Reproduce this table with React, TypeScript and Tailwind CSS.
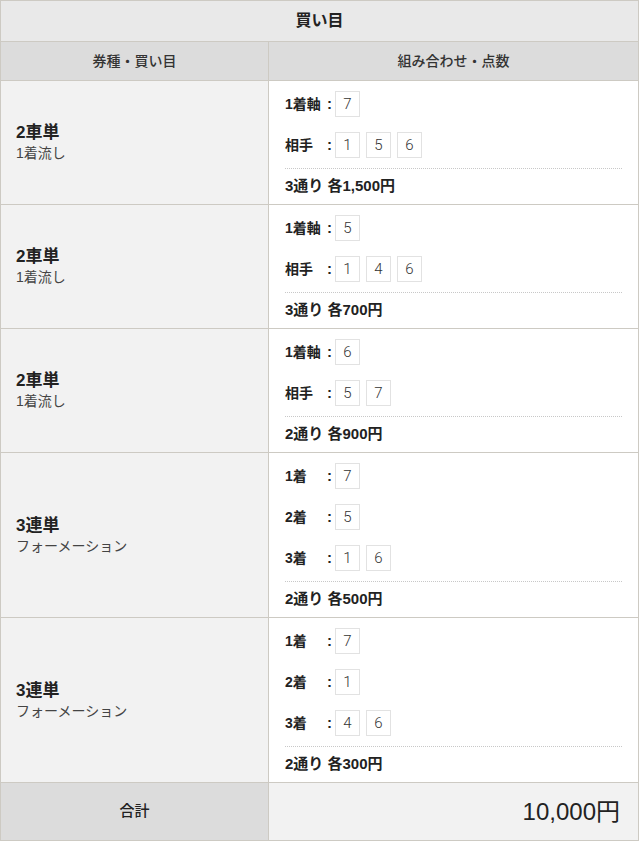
import React from "react";

type Line = { label: string; nums: string[] };
type Row = { type: string; sub: string; lines: Line[]; summary: string };

const rows: Row[] = [
  {
    type: "2車単",
    sub: "1着流し",
    lines: [
      { label: "1着軸", nums: ["7"] },
      { label: "相手", nums: ["1", "5", "6"] },
    ],
    summary: "3通り 各1,500円",
  },
  {
    type: "2車単",
    sub: "1着流し",
    lines: [
      { label: "1着軸", nums: ["5"] },
      { label: "相手", nums: ["1", "4", "6"] },
    ],
    summary: "3通り 各700円",
  },
  {
    type: "2車単",
    sub: "1着流し",
    lines: [
      { label: "1着軸", nums: ["6"] },
      { label: "相手", nums: ["5", "7"] },
    ],
    summary: "2通り 各900円",
  },
  {
    type: "3連単",
    sub: "フォーメーション",
    lines: [
      { label: "1着", nums: ["7"] },
      { label: "2着", nums: ["5"] },
      { label: "3着", nums: ["1", "6"] },
    ],
    summary: "2通り 各500円",
  },
  {
    type: "3連単",
    sub: "フォーメーション",
    lines: [
      { label: "1着", nums: ["7"] },
      { label: "2着", nums: ["1"] },
      { label: "3着", nums: ["4", "6"] },
    ],
    summary: "2通り 各300円",
  },
];

const font = { fontFamily: '"Liberation Sans", "Noto Sans CJK JP", sans-serif' };
const numFont = { fontFamily: 'Roboto, "Liberation Sans", sans-serif' };

export default function App() {
  return (
    <div className="w-[640px] bg-white text-[#222]" style={font}>
      <div className="w-[639px] border border-[#cdcac3]">
        <div className="h-[41px] bg-[#e9e9e9] flex items-center justify-center text-[16px] font-semibold border-b border-[#cdcac3]">
          買い目
        </div>
        <div className="flex h-[38px] bg-[#dcdcdc] text-[14px] font-medium text-[#333]">
          <div className="w-[268px] border-r border-[#cdcac3] flex items-center justify-center">
            券種・買い目
          </div>
          <div className="flex-1 flex items-center justify-center">組み合わせ・点数</div>
        </div>
        {rows.map((r, i) => (
          <div key={i} className="flex border-t border-[#cdcac3]">
            <div className="w-[268px] shrink-0 bg-[#f2f2f2] border-r border-[#cdcac3] flex flex-col justify-center pl-[15px]">
              <div className="text-[17px] leading-[20px] font-semibold">{r.type}</div>
              <div className="text-[14px] leading-[18px] text-[#444] mt-[1px]">{r.sub}</div>
            </div>
            <div className="flex-1 bg-white pl-[16px] pr-[16px] pt-[10px] pb-[8px]">
              <div className="flex flex-col gap-[15px]">
                {r.lines.map((l, j) => (
                  <div key={j} className="flex items-center h-[26px]">
                    <span className="w-[42px] text-[14px] font-semibold whitespace-nowrap">{l.label}</span>
                    <span className="w-[8px] text-[15px] font-bold text-left">:</span>
                    <div className="flex gap-[6px]">
                      {l.nums.map((n, k) => (
                        <span
                          key={k}
                          className="w-[25px] h-[26px] border border-[#e2e2e2] flex items-center justify-center text-[15px] font-light text-[#333]"
                          style={numFont}
                        >
                          {n}
                        </span>
                      ))}
                    </div>
                  </div>
                ))}
              </div>
              <div className="mt-[10px] border-t border-dotted border-[#c8c8c8]" />
              <div className="pt-[7px] text-[15px] leading-[20px] font-semibold">{r.summary}</div>
            </div>
          </div>
        ))}
        <div className="flex h-[58px] border-t border-[#cdcac3]">
          <div className="w-[268px] shrink-0 bg-[#dcdcdc] border-r border-[#cdcac3] flex items-center justify-center text-[15px] font-medium">
            合計
          </div>
          <div className="flex-1 bg-[#f2f2f2] flex items-center justify-end pr-[18px] text-[24px]">
            10,000円
          </div>
        </div>
      </div>
    </div>
  );
}
